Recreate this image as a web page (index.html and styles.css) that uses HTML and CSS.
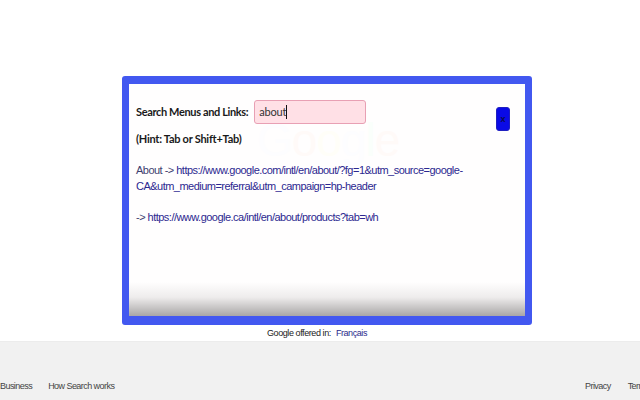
FILE: index.html
```html
<!DOCTYPE html>
<html lang="en">
<head>
<meta charset="utf-8">
<title>Search Menus and Links</title>
<link rel="stylesheet" href="styles.css">
</head>
<body>
<main class="top">
  <section class="panel">
    <div class="ghost"><span class="g-b">G</span><span class="g-r">o</span><span class="g-y">o</span><span class="g-b">g</span><span class="g-g">l</span><span class="g-r">e</span></div>
    <div class="content">
      <div class="search-row">
        <label class="label">Search Menus and Links:</label>
        <div class="input"><span class="typed">about</span><i class="caret"></i></div>
      </div>
      <p class="hint">(Hint: Tab or Shift+Tab)</p>
      <p class="result">About -&gt; <a>https://www.google.com/intl/en/about/?fg=1&amp;utm_source=google-CA&amp;utm_medium=referral&amp;utm_campaign=hp-header</a></p>
      <p class="result second">-&gt; <a>https://www.google.ca/intl/en/about/products?tab=wh</a></p>
    </div>
    <button class="close">x</button>
    <div class="fade"></div>
  </section>
  <p class="offered">Google offered in: <a>Français</a></p>
</main>
<footer class="footer">
  <div class="links">
    <a>Business</a><a>How Search works</a>
  </div>
  <div class="links end">
    <a>Privacy</a><a>Terms</a>
  </div>
</footer>
</body>
</html>
```
FILE: styles.css
```css
* { box-sizing: border-box; }
html, body { margin: 0; height: 100%; overflow: hidden; }
body {
  width: 640px;
  height: 400px;
  background: #fff;
  font-family: "Liberation Sans", Arial, sans-serif;
  display: flex;
  flex-direction: column;
  overflow: hidden;
}
.top {
  height: 341px;
  padding: 76px 108px 0 122px;
  flex: none;
}
.panel {
  position: relative;
  width: 410px;
  height: 249px;
  background: #fffefe;
  border: 7px solid #4258f0;
  border-top-width: 8px;
  border-bottom-width: 9px;
  border-radius: 3px;
}
.content {
  position: relative;
  padding: 16px 50px 0 7px;
}
.search-row {
  display: flex;
  align-items: center;
  gap: 6px;
  height: 24px;
}
.label, .hint {
  font-family: Lato, sans-serif;
  font-size: 11px;
  font-weight: 700;
  letter-spacing: -0.36px;
  white-space: nowrap;
  color: #1a1a1a;
}
.label { padding-bottom: 2px; }
.input {
  width: 112px;
  height: 24px;
  display: flex;
  align-items: center;
  padding-left: 4px;
  background: #ffe0e6;
  border: 1px solid #e8a0b4;
  border-radius: 3px;
  font-family: Lato, sans-serif;
  font-size: 11px;
  letter-spacing: -0.2px;
  color: #333;
}
.typed { padding-bottom: 2px; }
.caret {
  width: 1px;
  height: 14px;
  background: #111;
}
.hint { margin: 7px 0 0; line-height: 15px; letter-spacing: -0.26px; }
.result {
  margin: 16px 0 0;
  width: 340px;
  font-size: 11px;
  letter-spacing: -0.52px;
  line-height: 16px;
  color: #3e3e70;
}
.result a { color: #2c2890; }
.second { margin-top: 15px; }
.close {
  position: absolute;
  top: 23px;
  right: 15px;
  width: 14px;
  height: 24px;
  padding: 0;
  background: #0a0ae6;
  border: 1px solid #2020c0;
  border-radius: 3px;
  color: #0a0a50;
  font-family: "Liberation Sans", sans-serif;
  font-size: 9px;
  font-weight: 700;
}
.ghost {
  position: absolute;
  left: 128px;
  top: 41px;
  font-size: 46px;
  line-height: 30px;
  letter-spacing: -1px;
}
.g-b { color: #fdfdff; }
.g-r { color: #fffaf8; }
.g-y { color: #fffef8; }
.g-g { color: #fafffb; }
.fade {
  position: absolute;
  left: 0;
  right: 0;
  bottom: 0;
  height: 34px;
  background: linear-gradient(to bottom, #fffefe 0%, #eeecec 45%, #a8a6a6 100%);
}
.offered {
  margin: 2px 0 0;
  text-align: center;
  width: 390px;
  font-size: 9px;
  letter-spacing: -0.42px;
  line-height: 12px;
  color: #222;
}
.offered a { color: #2a2a8c; margin-left: 3px; }
.footer {
  flex: 1;
  background: #f1f1f1;
  border-top: 1px solid #ececec;
  display: flex;
  justify-content: space-between;
  align-items: flex-end;
  padding-bottom: 8px;
}
.links {
  display: flex;
  gap: 16px;
  font-size: 9px;
  letter-spacing: -0.55px;
  line-height: 12px;
  color: #444;
}
.end { width: 55px; flex: none; white-space: nowrap; gap: 17px; }
```
